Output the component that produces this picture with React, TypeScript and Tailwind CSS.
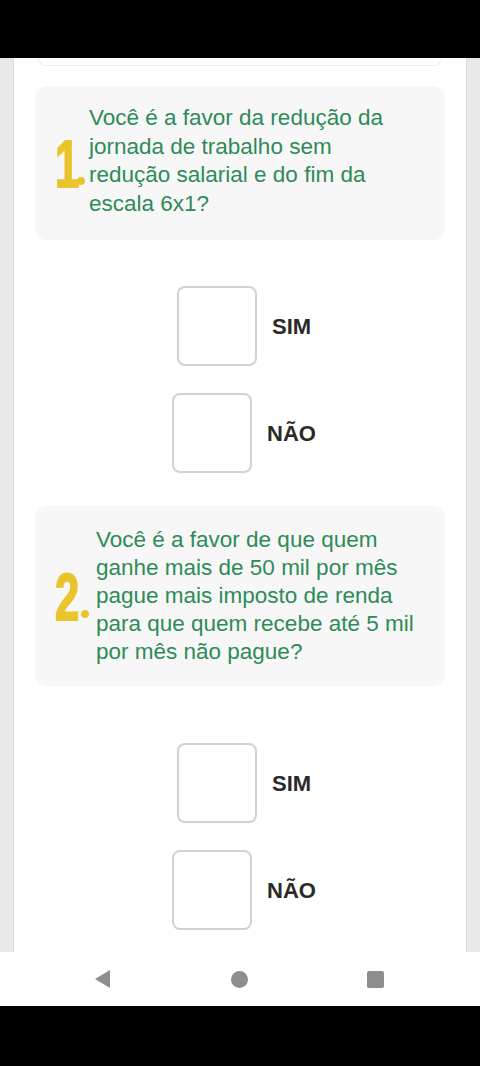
const q1 = ["Você é a favor da redução da", "jornada de trabalho sem", "redução salarial e do fim da", "escala 6x1?"];
const q2 = [
  "Você é a favor de que quem",
  "ganhe mais de 50 mil por mês",
  "pague mais imposto de renda",
  "para que quem recebe até 5 mil",
  "por mês não pague?",
];

function Number({ n, numW, gap }: { n: string; numW: string; gap: string }) {
  return (
    <div className={`flex items-end shrink-0 ${gap}`}>
      <span
        className={`block ${numW} text-[66px] leading-[48px] h-[47px] font-bold text-[#e9c42c] scale-x-[0.66] origin-left [-webkit-text-stroke:2px_#e9c42c]`}
      >
        {n}
      </span>
      <span className="w-[8px] h-[8px] rounded-full bg-[#e9c42c] mb-[2px] ml-[3px]" />
    </div>
  );
}

function Option({ label, offset }: { label: string; offset: string }) {
  return (
    <div className={`flex items-center ${offset}`}>
      <div className="w-[80px] h-[80px] rounded-[8px] border-2 border-[#d2d2d2] bg-white" />
      <span className="ml-[15px] text-[22px] font-bold text-[#2a2a2a]">{label}</span>
    </div>
  );
}

export default function App() {
  return (
    <div className="w-[480px] h-[1066px] flex flex-col bg-black" style={{ fontFamily: "'Liberation Sans', Arial, sans-serif" }}>
      {/* status bar */}
      <div className="h-[58px] bg-black" />

      <div className="h-[894px] flex bg-white overflow-hidden">
        <div className="w-[14px] bg-[#e9e9e9] border-r border-[#dcdcdc]" />
        <main className="flex-1 bg-white">
          {/* previous card edge */}
          <div className="mx-[24px] h-[8px] border border-t-0 border-[#ececec] rounded-b-[10px]" />

          {/* question 1 */}
          <section className="mt-[20px] mx-[21px] bg-[#f7f7f7] rounded-[12px] h-[154px] flex items-center pl-[20px] pr-[6px]">
            <div className="flex items-center">
              <Number n="1" numW="w-[19px]" gap="mr-[4px]" />
              <p className="text-[22.5px] leading-[28.5px] text-[#2e8b57] -mt-[4px]">
                {q1.map((l) => (
                  <span key={l} className="block whitespace-nowrap">{l}</span>
                ))}
              </p>
            </div>
          </section>

          <div className="mt-[46px] flex flex-col gap-[27px] pl-[158px]">
            <Option label="SIM" offset="ml-[5px]" />
            <Option label="NÃO" offset="" />
          </div>

          {/* question 2 */}
          <section className="mt-[33px] mx-[21px] bg-[#f7f7f7] rounded-[12px] h-[180px] flex items-center pl-[20px] pr-[6px]">
            <div className="flex items-center">
              <Number n="2" numW="w-[23px]" gap="mr-[7px]" />
              <p className="text-[22.5px] leading-[28px] text-[#2e8b57]">
                {q2.map((l) => (
                  <span key={l} className="block whitespace-nowrap">{l}</span>
                ))}
              </p>
            </div>
          </section>

          <div className="mt-[57px] flex flex-col gap-[27px] pl-[158px]">
            <Option label="SIM" offset="ml-[5px]" />
            <Option label="NÃO" offset="" />
          </div>
        </main>
        <div className="w-[14px] bg-[#e9e9e9] border-l border-[#dcdcdc]" />
      </div>

      {/* nav bar */}
      <div className="h-[54px] bg-white flex items-center">
        <div className="w-full flex justify-between items-center pl-[94px] pr-[96px]">
          <svg width="17" height="20" viewBox="0 0 17 20">
            <path d="M16 1 L1 10 L16 19 Z" fill="#8e8e8e" />
          </svg>
          <span className="w-[17px] h-[17px] rounded-full bg-[#8e8e8e]" />
          <span className="w-[17px] h-[17px] rounded-[2px] bg-[#8e8e8e]" />
        </div>
      </div>
      <div className="flex-1 bg-black" />
    </div>
  );
}
